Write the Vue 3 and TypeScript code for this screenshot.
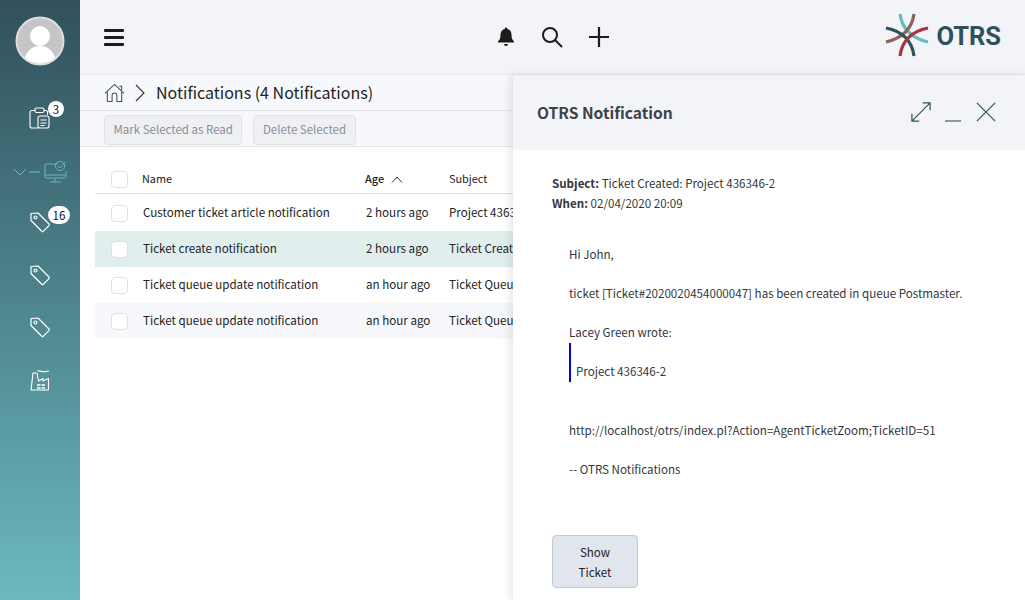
<script setup lang="ts">
import { ref } from 'vue'

// rows of the notification list
const rows = ref([
  { id: 1, name: 'Customer ticket article notification', age: '2 hours ago', subject: 'Project 436346-2', tone: '' },
  { id: 2, name: 'Ticket create notification', age: '2 hours ago', subject: 'Ticket Created: Project', tone: 'active' },
  { id: 3, name: 'Ticket queue update notification', age: 'an hour ago', subject: 'Ticket Queue Update', tone: '' },
  { id: 4, name: 'Ticket queue update notification', age: 'an hour ago', subject: 'Ticket Queue Update', tone: 'alt' },
])

const tags = ref([
  { id: 1, badge: '16' },
  { id: 2, badge: '' },
  { id: 3, badge: '' },
])
</script>

<template>
  <div class="page">
    <aside class="sidebar">
      <div class="avatar">
        <svg width="50" height="50" viewBox="0 0 50 50">
          <defs>
            <clipPath id="avatar-clip"><circle cx="25" cy="25" r="22.5" /></clipPath>
          </defs>
          <circle cx="25" cy="25" r="23.5" fill="#c6c6c6" stroke="#dedede" stroke-width="2" />
          <g clip-path="url(#avatar-clip)" fill="#fff">
            <circle cx="25" cy="20" r="10" />
            <path d="M9 48c0-11 7-18 16-18s16 7 16 18z" />
          </g>
        </svg>
      </div>

      <div class="nav-item first">
        <svg width="24" height="24" viewBox="0 0 24 24" fill="none" stroke="#fff" stroke-width="1.1">
          <path d="M7 4.500H4a2 2 0 0 0-2 2V20a2 2 0 0 0 2 2h6" />
          <path d="M16 4.500h2a2 2 0 0 1 1.500 1V9" />
          <rect x="7" y="2" width="9" height="4.500" rx="1.500" />
          <rect x="10" y="10" width="11" height="12" rx="2" />
          <path d="M12.500 14h6M12.500 17h6M12.500 19.500h4" />
        </svg>
        <span class="badge">3</span>
      </div>

      <div class="nav-item nav-active">
        <svg width="60" height="24" viewBox="0 0 60 24" fill="none" stroke="#66b8bd" stroke-width="1">
          <path d="M1 9l6 6 6-6" />
          <path d="M16 12h11" stroke-width="1.200" />
          <path d="M45 4H34a2 2 0 0 0-2 2v10a2 2 0 0 0 2 2h17a2 2 0 0 0 2-2v-5" />
          <path d="M32 15h21M42 18v4M37 22h11" />
          <circle cx="47" cy="6" r="4.600" />
          <path d="M44.800 6l2 2 6-6.500" />
        </svg>
      </div>

      <div v-for="tag in tags" :key="tag.id" class="nav-item">
        <svg width="24" height="24" viewBox="0 0 24 24" fill="none" stroke="#fff" stroke-width="1.200">
          <path d="M3 3.500l7-.5 11 11a1.200 1.200 0 0 1 0 1.600l-5.600 5.600a1.200 1.200 0 0 1-1.600 0L3 10.500z" stroke-linejoin="round" />
          <circle cx="7.500" cy="7.500" r="1.500" />
        </svg>
        <span v-if="tag.badge" class="badge badge-wide">{{ tag.badge }}</span>
      </div>

      <div class="nav-item">
        <svg width="24" height="24" viewBox="0 0 24 24" fill="none" stroke="#fff" stroke-width="1.100">
          <path d="M9.500 2.500Q15 4.500 21 3" />
          <path d="M3 22L5 5h4l1.500 8 4.500-2.500V13l5.500-2.500V22z" stroke-linejoin="round" />
          <path d="M9 17h3.500M13.500 17H17M9 20h3.500M13.500 20H17" stroke-width="1.400" />
        </svg>
      </div>
    </aside>

    <main class="main">
      <header class="topbar">
        <button class="plain menu" aria-label="Menu">
          <span></span><span></span><span></span>
        </button>
        <div class="tools">
          <svg width="20" height="22" viewBox="0 0 20 22" fill="#1c1c1c">
            <path d="M10 1.500a1.300 1.300 0 0 1 1.300 1.400c3 .7 4.200 3.200 4.200 6.100 0 3.600 1 5 2.500 6.300v1.200H2v-1.200C3.500 14 4.500 12.600 4.500 9c0-2.900 1.200-5.400 4.200-6.100A1.300 1.300 0 0 1 10 1.500z" />
            <path d="M8 18h4a2 2 0 0 1-4 0z" />
          </svg>
          <svg width="22" height="22" viewBox="0 0 22 22" fill="none" stroke="#1c1c1c" stroke-width="2">
            <circle cx="9" cy="9" r="7" />
            <path d="M14 14l7 7" />
          </svg>
          <svg width="22" height="22" viewBox="0 0 22 22" fill="none" stroke="#1c1c1c" stroke-width="2.200">
            <path d="M11 1v20M1 11h20" />
          </svg>
        </div>
        <div class="brand">
          <svg width="44" height="44" viewBox="0 0 44 44" fill="none" stroke-width="3.200">
            <path d="M15 1Q18 23 43 29" stroke="#64bcc1" />
            <path d="M29 1Q26 23 1 29" stroke="#8c645c" />
            <path d="M1 15Q26 20 29 43" stroke="#2f515e" />
            <path d="M43 15Q18 20 15 43" stroke="#a83242" />
          </svg>
          <span class="brand-name">OTRS</span>
        </div>
      </header>

      <nav class="crumbs">
        <svg width="21" height="20" viewBox="0 0 22 20" fill="none" stroke="#3b5560" stroke-width="1.100">
          <path d="M1 10.500L11 1l10 9.500" />
          <path d="M3.500 9v10h5v-6.500a2.500 2.500 0 0 1 5 0V19h5V9" />
          <path d="M16 3h2.500v4" />
        </svg>
        <svg class="crumb-sep" width="12" height="18" viewBox="0 0 12 18" fill="none" stroke="#333" stroke-width="1.100">
          <path d="M2 1l8 8-8 8" />
        </svg>
        <h1>Notifications (4 Notifications)</h1>
      </nav>

      <div class="actions">
        <button class="ghost">Mark Selected as Read</button>
        <button class="ghost">Delete Selected</button>
      </div>

      <section class="list">
        <div class="row head">
          <span class="check"></span>
          <span class="col-name">Name</span>
          <span class="col-age sorted">Age
            <svg width="12" height="7" viewBox="0 0 12 7" fill="none" stroke="#333" stroke-width="1">
              <path d="M1 6.500l5-5.500 5 5.500" />
            </svg>
          </span>
          <span class="col-subject">Subject</span>
        </div>
        <div v-for="row in rows" :key="row.id" class="row item" :class="row.tone">
          <span class="check"></span>
          <span class="col-name">{{ row.name }}</span>
          <span class="col-age">{{ row.age }}</span>
          <span class="col-subject">{{ row.subject }}</span>
        </div>
      </section>

      <!-- detail panel lies over the list -->
      <section class="panel">
        <div class="panel-head">
          <h2>OTRS Notification</h2>
          <div class="panel-tools">
            <svg width="20" height="20" viewBox="0 0 22 22" fill="none" stroke="#2f515e" stroke-width="1.300">
              <path d="M1 21L21 1M13 1h8v8M1 13v8h8" />
            </svg>
            <svg class="minimize" width="16" height="4" viewBox="0 0 16 4" fill="none" stroke="#8a9aa4" stroke-width="2">
              <path d="M0 2h16" />
            </svg>
            <svg width="20" height="20" viewBox="0 0 22 22" fill="none" stroke="#2f515e" stroke-width="1.300">
              <path d="M1 1l20 20M21 1L1 21" />
            </svg>
          </div>
        </div>
        <div class="panel-body">
          <p class="meta"><b>Subject:</b> Ticket Created: Project 436346-2</p>
          <p class="meta"><b>When:</b> 02/04/2020 20:09</p>
          <div class="mail">
            <p>Hi John,</p>
            <p>ticket [Ticket#2020020454000047] has been created in queue Postmaster.</p>
            <p class="lead">Lacey Green wrote:</p>
            <blockquote>Project 436346-2</blockquote>
            <p>http://localhost/otrs/index.pl?Action=AgentTicketZoom;TicketID=51</p>
            <p>-- OTRS Notifications</p>
          </div>
          <button class="show">Show<br />Ticket</button>
        </div>
      </section>
    </main>
  </div>
</template>

<style>
html,
body {
  margin: 0;
  overflow: hidden;
}
</style>

<style scoped>
.page {
  display: flex;
  width: 1025px;
  height: 600px;
  overflow: hidden;
  background: #fff;
  color: #222;
  font-family: "Noto Sans CJK SC", "Noto Sans", sans-serif;
  font-size: 11.6px;
  line-height: 19.5px;
}

.sidebar {
  flex: 0 0 80px;
  display: flex;
  flex-direction: column;
  align-items: center;
  padding-top: 16px;
  box-sizing: border-box;
  background: linear-gradient(180deg, #31505c 0%, #6bb9bf 100%);
}

.avatar {
  width: 50px;
  height: 50px;
  margin-bottom: 40px;
}

.nav-item {
  position: relative;
  display: flex;
  align-items: center;
  justify-content: center;
  width: 24px;
  height: 24px;
  margin-bottom: 28.5px;
}

.first {
  margin-bottom: 30px;
}

.nav-active {
  justify-content: flex-start;
  margin-bottom: 26px;
}

.nav-active svg {
  flex: none;
  margin-left: -15px;
}

.badge {
  position: absolute;
  top: -5px;
  left: 20px;
  width: 16px;
  height: 16px;
  border-radius: 8px;
  background: #fff;
  color: #111;
  line-height: 16px;
  text-align: center;
}

.badge-wide {
  top: -4px;
  width: 22px;
  height: 18px;
  border-radius: 9px;
  line-height: 18px;
}

.main {
  position: relative;
  flex: 1;
  min-width: 0;
}

.topbar {
  display: grid;
  grid-template-columns: 1fr auto 1fr;
  align-items: center;
  height: 74px;
  padding: 0 24px;
  background: #f2f4f8;
  border-bottom: 1px solid #e4e6ea;
}

.plain {
  border: 0;
  background: none;
  padding: 0;
}

.menu {
  display: flex;
  flex-direction: column;
  gap: 4px;
  width: 20px;
}

.menu span {
  display: block;
  height: 3px;
  background: #1c1c1c;
  border-radius: 1px;
}

.tools {
  display: flex;
  align-items: center;
  gap: 25px;
}

.brand {
  display: flex;
  align-items: center;
  justify-content: flex-end;
  gap: 7px;
}

.brand svg {
  margin-bottom: 4px;
}

.brand-name {
  color: #2f515e;
  font-family: Roboto, "Liberation Sans", sans-serif;
  font-size: 25.5px;
  font-weight: 700;
  line-height: 1;
}

.crumbs {
  display: flex;
  align-items: center;
  gap: 10px;
  height: 35px;
  padding-left: 24px;
  background: #f7f8fc;
  border-bottom: 1px solid #e2e4e8;
}

.crumb-sep {
  margin-left: -1px;
}

.crumbs h1 {
  margin: 0;
  color: #1f1f1f;
  font-size: 16px;
  font-weight: 400;
}

.actions {
  display: flex;
  gap: 11px;
  height: 36px;
  padding: 4px 0 0 24px;
  box-sizing: border-box;
  background: #f7f8fc;
  border-bottom: 1px solid #e2e4e8;
}

.ghost {
  height: 30px;
  padding: 0 8.5px;
  border: 1px solid #dfe2e6;
  border-radius: 4px;
  background: #eef0f4;
  color: #8b8f96;
  font: inherit;
  font-size: 11.5px;
}

.list {
  padding: 12px 0 0 15px;
}

.row {
  display: grid;
  grid-template-columns: 48px 223px 83px 1fr;
  align-items: center;
}

.head {
  height: 35px;
  padding-top: 6px;
  box-sizing: border-box;
  margin-bottom: 1px;
  border-bottom: 1px solid #dfe1e5;
  font-size: 10.9px;
}

.item {
  height: 36px;
}

.active {
  background: #e0efee;
}

.alt {
  background: #f7f8fb;
}

.check {
  width: 15px;
  height: 15px;
  margin-left: 16px;
  border: 1px solid #dfe1e5;
  border-radius: 4px;
  background: #fff;
}

.col-name,
.col-age,
.col-subject {
  white-space: nowrap;
}

.head .col-name {
  margin-left: -1px;
}

.sorted {
  display: flex;
  align-items: center;
  gap: 7px;
  margin-left: -1px;
  font-weight: 500;
}

.panel {
  position: absolute;
  top: 75px;
  left: 433px;
  right: 0;
  bottom: 0;
  background: #fff;
  box-shadow: -3px 0 8px rgba(40, 50, 60, 0.12);
}

.panel-head {
  display: flex;
  align-items: center;
  justify-content: space-between;
  height: 75px;
  padding: 0 29px 0 24px;
  background: #f2f4f8;
}

.panel-head h2 {
  margin: 0;
  color: #3d4248;
  font-size: 15.6px;
  font-weight: 700;
}

.panel-tools {
  display: flex;
  align-items: center;
  gap: 14px;
  margin-bottom: 1px;
}

.minimize {
  margin-top: 18px;
  margin-right: 1px;
}

.panel-body {
  padding: 24px 0 0 39px;
  color: #33373c;
}

.meta {
  margin: 0;
}

.mail {
  padding: 32px 0 0 17px;
}

.mail p {
  margin: 0 0 19.5px;
}

.mail .lead {
  margin-bottom: 0;
}

.mail blockquote {
  margin: 0 0 39px;
  padding: 19.5px 0 0 5px;
  border-left: 2px solid #0000e0;
}

.show {
  display: block;
  width: 86px;
  height: 53px;
  margin-top: 56px;
  border: 1px solid #c4cad4;
  border-radius: 4px;
  background: #e1e5ed;
  color: #222;
  font: inherit;
  line-height: 20px;
}
</style>
